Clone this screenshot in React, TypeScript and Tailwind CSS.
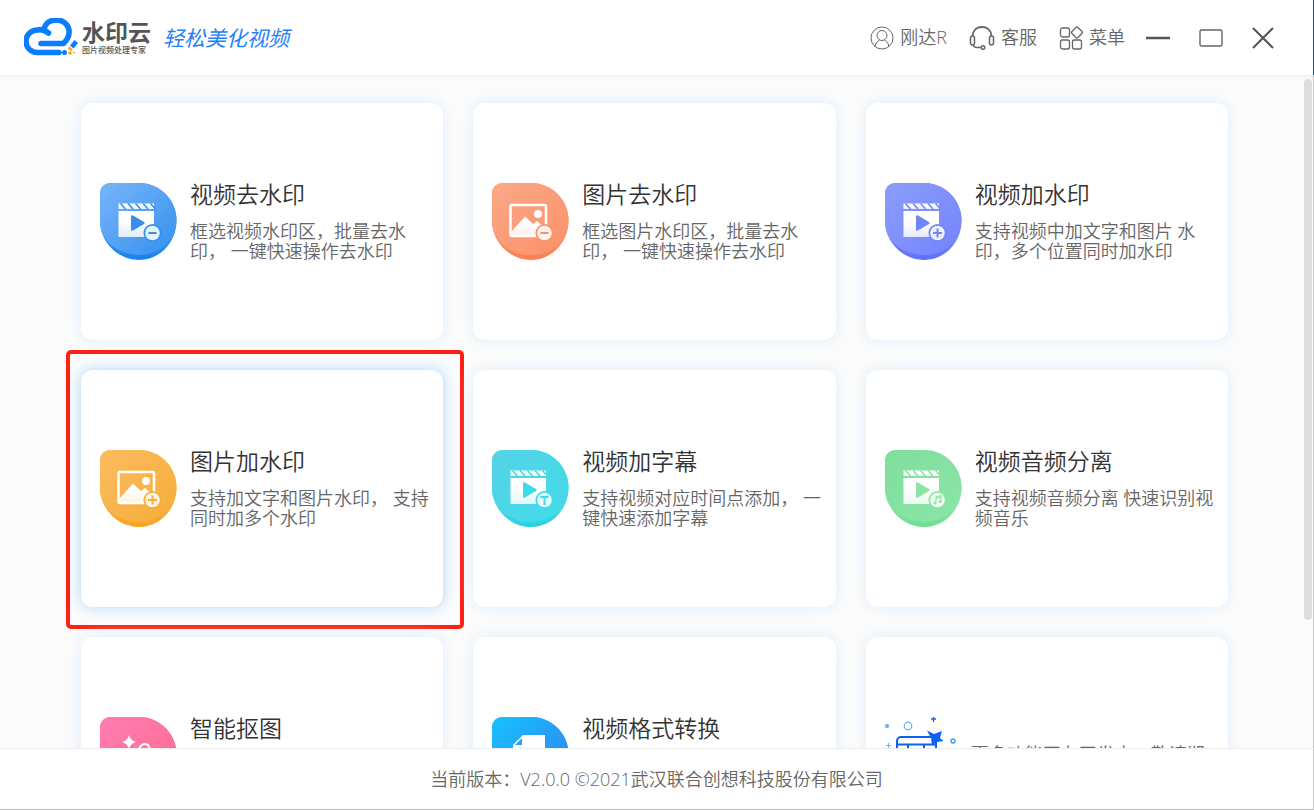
import React, { useId } from 'react';

type Glyph = 'video' | 'picture' | 'cutout' | 'convert';
type Badge = 'minus' | 'plus' | 'text' | 'music';

interface Tool {
  title: string;
  text?: string;
  glyph: Glyph;
  badge?: Badge;
  colors: [string, string, string];
  active?: boolean;
}

const TOOLS: Tool[] = [
  {
    title: '视频去水印',
    text: '框选视频水印区，批量去水印， 一键快速操作去水印',
    glyph: 'video',
    badge: 'minus',
    colors: ['#77b5fb', '#3490ec', '#1a80ee'],
  },
  {
    title: '图片去水印',
    text: '框选图片水印区，批量去水印， 一键快速操作去水印',
    glyph: 'picture',
    badge: 'minus',
    colors: ['#fba988', '#fa9068', '#fb7e4e'],
  },
  {
    title: '视频加水印',
    text: '支持视频中加文字和图片 水印，多个位置同时加水印',
    glyph: 'video',
    badge: 'plus',
    colors: ['#8c9dfd', '#7383fb', '#5d6ffb'],
  },
  {
    title: '图片加水印',
    text: '支持加文字和图片水印， 支持同时加多个水印',
    glyph: 'picture',
    badge: 'plus',
    colors: ['#fdbb5f', '#f4ae3a', '#f9a31b'],
    active: true,
  },
  {
    title: '视频加字幕',
    text: '支持视频对应时间点添加， 一键快速添加字幕',
    glyph: 'video',
    badge: 'text',
    colors: ['#55d3e6', '#40dbe8', '#27d0df'],
  },
  {
    title: '视频音频分离',
    text: '支持视频音频分离 快速识别视频音乐',
    glyph: 'video',
    badge: 'music',
    colors: ['#7fdf9c', '#8be5a8', '#6cdd90'],
  },
  {
    title: '智能抠图',
    glyph: 'cutout',
    colors: ['#ff7db4', '#ff6b8c', '#ff5c7e'],
  },
  {
    title: '视频格式转换',
    glyph: 'convert',
    colors: ['#16c3ff', '#347df0', '#2f6fe8'],
  },
];

const BadgeMark: React.FC<{ badge: Badge; color: string }> = ({ badge, color }) => (
  <g fill="none" stroke={color} strokeWidth="2">
    <circle cx="52.500" cy="50" r="9" fill={color} stroke="none" />
    <circle cx="52.500" cy="50" r="7.300" fill="#fff" fillOpacity="0.88" stroke="none" />
    {badge === 'minus' && <path d="M48.500 50h8" />}
    {badge === 'plus' && <path d="M48 50h9M52.500 45.500v9" />}
    {badge === 'text' && <path d="M48.500 47h8M52.500 47v8" />}
    {badge === 'music' && (
      <>
        <path d="M51 53v-6l5-1.500v6M51 48.500l5-1.500" strokeWidth="1.200" />
        <circle cx="50" cy="53" r="1.400" fill={color} stroke="none" />
        <circle cx="55" cy="51.700" r="1.400" fill={color} stroke="none" />
      </>
    )}
  </g>
);

const ToolIcon: React.FC<Pick<Tool, 'glyph' | 'badge' | 'colors'>> = ({ glyph, badge, colors }) => {
  const id = useId();
  const [from, to, edge] = colors;

  return (
    <svg viewBox="0 0 77 77" className="size-[77px] shrink-0" aria-hidden="true">
      <defs>
        <linearGradient id={`${id}-bg`} x1="0" y1="0" x2="1" y2="1">
          <stop offset="0" stopColor={from} />
          <stop offset="1" stopColor={to} />
        </linearGradient>
        <linearGradient id={`${id}-rim`} x1="0" y1="0" x2="0" y2="1">
          <stop offset="0.750" stopColor={to} />
          <stop offset="1" stopColor={edge} />
        </linearGradient>
        <linearGradient id={`${id}-fg`} x1="0" y1="0" x2="0" y2="1">
          <stop offset="0.400" stopColor="#fff" />
          <stop offset="1" stopColor="#fff" stopOpacity="0.820" />
        </linearGradient>
      </defs>
      <path d="M12 0H39C60 0 76.500 17 76.500 38S60 77 39 77 0 59 0 38V12Q0 0 12 0Z" fill={`url(#${id}-rim)`} />
      <path d="M12 0H39C60 0 76.500 17 76.500 37S60 72 39 72 0 58 0 38V12Q0 0 12 0Z" fill={`url(#${id}-bg)`} />
      {glyph === 'video' && (
        <g fill={`url(#${id}-fg)`}>
          <path d="M18.500 20.500h35.500v5.500H18.500z" />
          <path d="M18.500 28h35.500v26H18.500z" />
          <path
            d="M20.500 20.500l5 5.500M28 20.500l5 5.500M35.500 20.500l5 5.500M43 20.500l5 5.500M50.500 20.500l5 5.500"
            stroke={to}
            strokeWidth="1.600"
          />
          <path d="M31 33.500Q31 31.500 33 32.500L44 39Q45.500 40 44 41L33 47.500Q31 48.500 31 46.500Z" fill={to} />
        </g>
      )}
      {glyph === 'picture' && (
        <>
          <rect x="18.500" y="22" width="35.500" height="31" rx="1.500" fill="none" stroke="#fff" strokeWidth="2.500" />
          <circle cx="46" cy="31" r="4" fill="#fff" />
          <path d="M19 49L33 33.500 41 41 45 38 54 46V53H19Z" fill={`url(#${id}-fg)`} />
        </>
      )}
      {glyph === 'cutout' && (
        <>
          <path d="M29 18Q30.500 23.500 36 25 30.500 26.500 29 32 27.500 26.500 22 25 27.500 23.500 29 18Z" fill="#fff" />
          <path d="M39 32Q41 27 45 27T50 33" fill="none" stroke="#fff" strokeWidth="2" />
          <path d="M20 40h36v16H20z" fill="#fff" />
        </>
      )}
      {glyph === 'convert' && (
        <>
          <path d="M31 18H53V56H21V28Z" fill="#fff" />
          <path d="M30 21V28H23Z" fill="#27a2f8" />
        </>
      )}
      {badge && <BadgeMark badge={badge} color={to} />}
    </svg>
  );
};

const ComingSoonIcon: React.FC = () => (
  <svg viewBox="0 0 77 77" className="size-[77px] shrink-0" fill="none" aria-hidden="true">
    <path d="M1 9h4M3 7v4M1.500 7.500l3 3M4.500 7.500l-3 3" stroke="#6bb3fb" strokeWidth="1.300" />
    <circle cx="24" cy="9" r="3.800" stroke="#5cabfb" strokeWidth="1.200" />
    <path d="M49.500-1v6M47 2h5" stroke="#1a62ee" strokeWidth="1.300" />
    <circle cx="69" cy="24" r="2" stroke="#3d95fb" strokeWidth="1.300" />
    <path d="M2 28.500h5M4.500 26v5" stroke="#6bb3fb" />
    <rect x="13" y="20" width="39" height="40" rx="4" stroke="#0b63f6" strokeWidth="2" />
    <path d="M13 27.500h39M24 28v6M40 28v6" stroke="#0b63f6" strokeWidth="2" />
    <path d="M43 13.500L50 17 58 14 56 21 59.500 24 53 25 48 28 47 21Z" fill="#0b63f6" />
  </svg>
);

const ToolCard: React.FC<Tool> = ({ title, text, active, ...icon }) => (
  <button
    type="button"
    className={
      active
        ? 'relative flex items-center gap-[13px] rounded-xl bg-white pl-[19px] pr-2 text-left shadow-[0_0_14px_#a9d6fb]'
        : 'relative flex items-center gap-[13px] rounded-xl bg-white pl-[19px] pr-2 text-left shadow-[0_0_14px_#dceefd]'
    }
  >
    <ToolIcon {...icon} />
    <span className="flex flex-1 flex-col gap-3 pb-1">
      <span className="text-[23px] leading-[30px] text-[#333]">{title}</span>
      <span className="h-10 text-[18px] leading-5 text-[#666]">{text}</span>
    </span>
    {active && (
      <span className="pointer-events-none absolute -bottom-[22px] -left-[15px] -right-[21px] -top-5 rounded-[5px] border-4 border-[#ff2015]" />
    )}
  </button>
);

const Logo: React.FC = () => (
  <a href="#" className="flex items-center gap-1">
    <svg viewBox="0 0 54 40" className="h-10 w-[54px]" fill="none" aria-hidden="true">
      <path
        d="M35 34.500H13.500A10 10 0 0 1 13 12Q19 10.500 24.500 15M20 12C21 -1.500 43 -1.500 45 12Q46 19 39.500 25.500H17"
        stroke="#0a7cff"
        strokeWidth="5.500"
        strokeLinecap="round"
        strokeLinejoin="round"
      />
      <path d="M46 27.500l4.500-5.500 3.500 3-4.500 5.500z" fill="#0a7cff" />
      <path d="M45 28l4 3.500-2 1.500-3-2z" fill="#ffa51e" />
      <circle cx="40.500" cy="34.500" r="2.500" fill="#0a7cff" />
      <circle cx="46" cy="35" r="1.800" fill="#ffa51e" />
      <circle cx="50" cy="34.500" r="1" fill="#ffa51e" />
    </svg>
    <span className="flex flex-col text-[#555]">
      <span className="text-[23px] font-bold leading-6">水印云</span>
      <span className="text-[8px] font-medium leading-3">图片视频处理专家</span>
    </span>
    <span className="ml-2 text-[21px] font-normal italic leading-6 text-[#1f80fb]">轻松美化视频</span>
  </a>
);

const Header: React.FC = () => (
  <header className="relative flex h-[75px] shrink-0 items-center justify-between border-r border-[#1f5688] bg-white pl-6 pr-[38px] shadow-[0_0_5px_#e4e4e4]">
    <Logo />
    <nav className="flex items-center text-[18px] text-[#666]">
      <button type="button" className="flex items-center gap-[6px]">
        <svg viewBox="0 0 24 24" className="size-6" fill="none" stroke="#666" aria-hidden="true">
          <circle cx="12" cy="12" r="11" />
          <circle cx="12" cy="9.500" r="5" />
          <path d="M5 20.500Q5.500 16 9.500 14M19 20.500Q18.500 16 14.500 14" />
        </svg>
        刚达R
      </button>
      <button type="button" className="ml-[22px] flex items-center gap-[6px]">
        <svg viewBox="0 0 26 24" className="h-6 w-[26px]" fill="none" stroke="#666" strokeWidth="1.500" aria-hidden="true">
          <path d="M3.500 10C4 4 8 1 13 1S22 4 22.500 10" strokeWidth="1.800" />
          <rect x="1.500" y="10" width="4" height="9" rx="2" />
          <rect x="20.500" y="10" width="4" height="9" rx="2" />
          <path d="M4 19Q5 21.500 8 21.500H12" />
          <circle cx="14" cy="21.500" r="1.800" />
        </svg>
        客服
      </button>
      <button type="button" className="ml-[22px] flex items-center gap-[6px]">
        <svg viewBox="0 0 24 24" className="size-6" fill="none" stroke="#666" strokeWidth="1.300" aria-hidden="true">
          <rect x="1.500" y="2" width="9" height="9" rx="2" />
          <rect x="1.500" y="14" width="9" height="9" rx="2" />
          <rect x="13.500" y="14" width="9" height="9" rx="2" />
          <path d="M17 1.500Q18 .5 19 1.500L23 5.500Q24 6.500 23 7.500L19 11.500Q18 12.500 17 11.500L13 7.500Q12 6.500 13 5.500Z" />
        </svg>
        菜单
      </button>
      <button type="button" aria-label="最小化" className="ml-5">
        <svg viewBox="0 0 26 24" className="h-6 w-[26px]" stroke="#555">
          <path d="M1 12h24" strokeWidth="2.500" />
        </svg>
      </button>
      <button type="button" aria-label="最大化" className="ml-[27px]">
        <svg viewBox="0 0 26 24" className="h-6 w-[26px]" fill="none" stroke="#666">
          <rect x="2" y="4" width="22" height="16" rx="1.500" strokeWidth="1.400" />
        </svg>
      </button>
      <button type="button" aria-label="关闭" className="ml-[27px]">
        <svg viewBox="0 0 24 24" className="size-6" stroke="#555">
          <path d="M2 2L22 22M22 2L2 22" strokeWidth="2" />
        </svg>
      </button>
    </nav>
  </header>
);

export default function App() {
  return (
    <div className="flex h-screen flex-col bg-white font-['Open_Sans','Noto_Sans_CJK_SC',sans-serif] font-[350]">
      <Header />
      <main className="flex min-h-0 flex-1 justify-between overflow-hidden border-r border-[#c8c8c8] bg-[#fbfbfb]">
        <div className="grid flex-1 auto-rows-[237px] grid-cols-3 gap-[30px] pl-[81px] pt-7">
          {TOOLS.map((tool) => (
            <ToolCard key={tool.title} {...tool} />
          ))}
          <div className="flex items-center gap-[10px] rounded-xl bg-white pl-[18px] pr-3 shadow-[0_0_14px_#dceefd]">
            <ComingSoonIcon />
            <p className="flex-1 pt-4 text-[18px] leading-5 text-[#666]">更多功能正在开发中，敬请期待</p>
          </div>
        </div>
        <div className="ml-[76px] mr-px mt-1 h-[541px] w-2 shrink-0 rounded-full bg-[#dcdddd]" />
      </main>
      <footer className="flex h-[62px] shrink-0 items-center justify-center border-y border-r border-b-[#b8b8b8] border-r-[#c8c8c8] border-t-[#eeeeee] text-[18px] text-[#666]">
        当前版本：V2.0.0 ©2021武汉联合创想科技股份有限公司
      </footer>
    </div>
  );
}
